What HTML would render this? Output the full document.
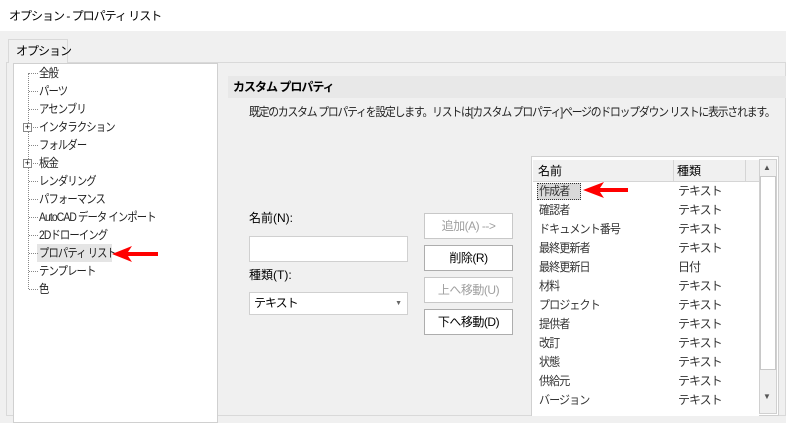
<!DOCTYPE html><html><head><meta charset="utf-8"><style>
*{margin:0;padding:0;box-sizing:border-box}
body{width:786px;height:416px;overflow:hidden;background:#f0f0f0;font-family:"Liberation Sans","Noto Sans CJK JP",sans-serif;font-size:12px;color:#000;position:relative}
.a{position:absolute;white-space:nowrap}
.t{line-height:18px}
.k{letter-spacing:-1px}
.btn{position:absolute;width:89px;height:26px;border:1px solid #adadad;background:#fff;text-align:center;line-height:24px;font-size:12px;letter-spacing:-0.5px}
.dis{color:#a0a0a0;border-color:#c8c8c8}
.dot{position:absolute;border-top:1px dotted #888;width:9px}
</style></head><body>
<div class="a" style="left:0;top:0;width:786px;height:31px;background:#fff"></div>
<div class="a t k" style="left:9px;top:7px;font-size:12px">オプション - プロパティ リスト</div>
<div class="a" style="left:6px;top:62px;width:780px;height:354px;border:1px solid #d9d9d9;background:#f0f0f0"></div>
<div class="a t k" style="left:8px;top:39px;width:60px;height:24px;border:1px solid #d9d9d9;border-bottom:none;background:#f0f0f0;padding-left:7px;line-height:22px">オプション</div>
<div class="a" style="left:13px;top:63px;width:205px;height:360px;border:1px solid #d0d0d0;background:#fff"></div>
<div class="a" style="left:28px;top:73px;height:216px;border-left:1px dotted #888"></div>
<div class="a" style="left:37px;top:244px;width:75px;height:18px;background:#e5e5e5"></div>
<div class="k" style="position:absolute;left:39px;top:64px;line-height:18px;color:#222;white-space:nowrap;transform:scaleX(0.86);transform-origin:left">
<div>全般</div><div>パーツ</div><div>アセンブリ</div><div>インタラクション</div><div>フォルダー</div><div>板金</div><div>レンダリング</div><div>パフォーマンス</div><div>AutoCAD データ インポート</div><div>2Dドローイング</div><div>プロパティ リスト</div><div>テンプレート</div><div>色</div></div>
<div class="dot" style="left:29px;top:73px"></div><div class="dot" style="left:29px;top:91px"></div><div class="dot" style="left:29px;top:109px"></div><div class="dot" style="left:29px;top:127px"></div><div class="dot" style="left:29px;top:145px"></div><div class="dot" style="left:29px;top:163px"></div><div class="dot" style="left:29px;top:181px"></div><div class="dot" style="left:29px;top:199px"></div><div class="dot" style="left:29px;top:217px"></div><div class="dot" style="left:29px;top:235px"></div><div class="dot" style="left:29px;top:253px"></div><div class="dot" style="left:29px;top:271px"></div><div class="dot" style="left:29px;top:289px"></div>
<div class="a" style="left:23px;top:123px;width:9px;height:9px;border:1px solid #888;background:#fff;font-size:9px;line-height:7px;text-align:center">+</div>
<div class="a" style="left:23px;top:159px;width:9px;height:9px;border:1px solid #888;background:#fff;font-size:9px;line-height:7px;text-align:center">+</div>
<svg class="a" style="left:108px;top:244px" width="52" height="20"><path d="M4 10 L24 2 L20 8 L50 8 L50 12 L20 12 L24 18 Z" fill="#f00"/></svg>
<div class="a" style="left:228px;top:76px;width:558px;height:22px;background:#e8e8e8"></div>
<div class="a t k" style="left:233px;top:78px;font-weight:bold;font-size:12px">カスタム プロパティ</div>
<div class="a t" style="left:249px;top:103px;color:#222;letter-spacing:-1.3px;transform:scaleX(0.9);transform-origin:left">既定のカスタム プロパティを設定します。リストは[カスタム プロパティ]ページのドロップダウン リストに表示されます。</div>
<div class="a t" style="left:249px;top:209px">名前(N):</div>
<div class="a" style="left:249px;top:236px;width:159px;height:26px;border:1px solid #d0d0d0;background:#fff"></div>
<div class="a t" style="left:249px;top:266px">種類(T):</div>
<div class="a k" style="left:249px;top:292px;width:159px;height:23px;border:1px solid #d0d0d0;background:#fff;padding-left:4px;line-height:21px">テキスト<span style="position:absolute;right:6px;top:0;font-size:7px;color:#666">▼</span></div>
<div class="btn dis" style="left:424px;top:213px">追加(A) --&gt;</div>
<div class="btn" style="left:424px;top:245px">削除(R)</div>
<div class="btn dis" style="left:424px;top:277px">上へ移動(U)</div>
<div class="btn" style="left:424px;top:309px">下へ移動(D)</div>
<div class="a" style="left:531px;top:156px;width:248px;height:260px;border:1px solid #d0d0d0;background:#fff"></div>
<div class="a" style="left:533px;top:160px;width:226px;height:22px;background:#f0f0f0;border-bottom:1px solid #d5d5d5"></div>
<div class="a" style="left:673px;top:160px;height:22px;border-left:1px solid #d5d5d5"></div>
<div class="a" style="left:745px;top:160px;height:22px;border-left:1px solid #d5d5d5"></div>
<div class="a t" style="left:538px;top:162px">名前</div><div class="a t" style="left:677px;top:162px">種類</div>
<div class="a" style="left:759px;top:159px;width:18px;height:255px;background:#f0f0f0;border:1px solid #d0d0d0"></div>
<div class="a" style="left:760px;top:176px;width:16px;height:194px;background:#fff;border:1px solid #c8c8c8"></div>
<div class="a" style="left:763px;top:163px;font-size:8px;color:#555">▲</div>
<div class="a" style="left:763px;top:392px;font-size:8px;color:#555">▼</div>
<div class="a" style="left:537px;top:183px;width:44px;height:17px;background:#d9d9d9;border:1px dotted #333"></div>
<div class="k" style="position:absolute;left:539px;top:182px;line-height:19px;color:#333;white-space:nowrap;transform:scaleX(0.92);transform-origin:left">
<div>作成者</div><div>確認者</div><div>ドキュメント番号</div><div>最終更新者</div><div>最終更新日</div><div>材料</div><div>プロジェクト</div><div>提供者</div><div>改訂</div><div>状態</div><div>供給元</div><div>バージョン</div></div>
<div class="k" style="position:absolute;left:678px;top:182px;line-height:19px;color:#333">
<div>テキスト</div><div>テキスト</div><div>テキスト</div><div>テキスト</div><div>日付</div><div>テキスト</div><div>テキスト</div><div>テキスト</div><div>テキスト</div><div>テキスト</div><div>テキスト</div><div>テキスト</div></div>
<div class="a" style="left:532px;top:410px;width:227px;height:6px;background:#fff"></div>
<svg class="a" style="left:580px;top:180px" width="50" height="20"><path d="M3 10 L24 2 L20 8 L48 8 L48 12 L20 12 L24 18 Z" fill="#f00"/></svg>
</body></html>
